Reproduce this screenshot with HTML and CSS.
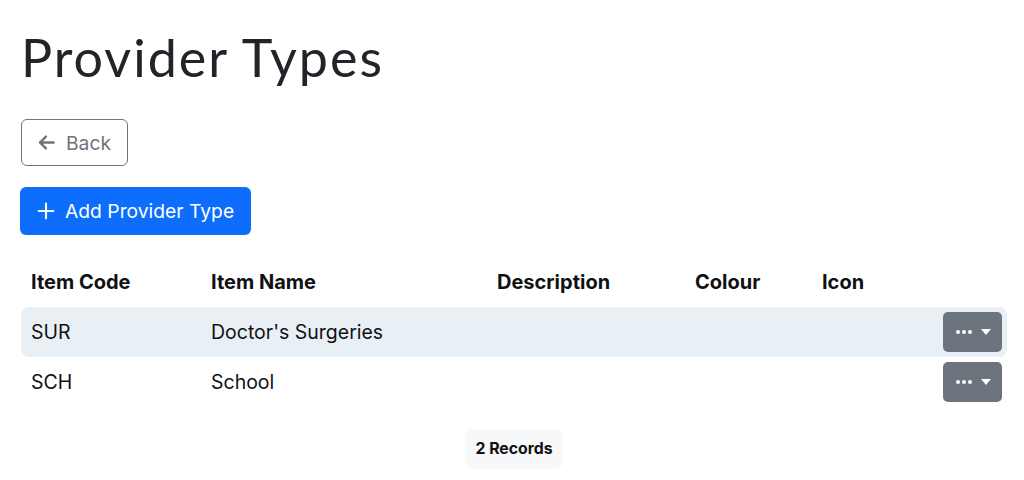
FILE: index.html
```html
<!DOCTYPE html>
<html lang="en">
<head>
<meta charset="utf-8">
<title>Provider Types</title>
<link rel="stylesheet" href="styles.css">
</head>
<body>
<main class="page">
  <h1 class="title">Provider Types</h1>
  <div class="actions">
    <a class="btn btn-outline" href="#">
      <svg class="ico" viewBox="0 0 16 16" width="19" height="19"><path d="M14 8H2.5M7.5 3 2.5 8l5 5" fill="none" stroke="currentColor" stroke-width="2" stroke-linecap="round" stroke-linejoin="round"/></svg>
      <span>Back</span>
    </a>
    <a class="btn btn-primary" href="#">
      <svg class="ico" viewBox="0 0 16 16" width="18" height="18"><path d="M8 1.5v13M1.5 8h13" fill="none" stroke="currentColor" stroke-width="1.9" stroke-linecap="round"/></svg>
      <span>Add Provider Type</span>
    </a>
  </div>
  <table class="grid">
    <thead>
      <tr>
        <th class="c-code">Item Code</th>
        <th class="c-name">Item Name</th>
        <th class="c-desc">Description</th>
        <th class="c-col">Colour</th>
        <th class="c-icon">Icon</th>
        <th class="c-act"></th>
      </tr>
    </thead>
    <tbody>
      <tr class="hl">
        <td>SUR</td>
        <td>Doctor's Surgeries</td>
        <td></td>
        <td></td>
        <td></td>
        <td class="c-act"><button class="dd" type="button"><span class="dots"><i></i><i></i><i></i></span><span class="caret"></span></button></td>
      </tr>
      <tr>
        <td>SCH</td>
        <td>School</td>
        <td></td>
        <td></td>
        <td></td>
        <td class="c-act"><button class="dd" type="button"><span class="dots"><i></i><i></i><i></i></span><span class="caret"></span></button></td>
      </tr>
    </tbody>
  </table>
  <div class="footer">
    <span class="badge">2 Records</span>
  </div>
</main>
</body>
</html>
```
FILE: styles.css
```css
* { box-sizing: border-box; }
html, body { margin: 0; padding: 0; background: #fff; }
body {
  font-family: Inter, "Liberation Sans", Arial, sans-serif;
  font-size: 19.5px;
  color: #111;
}
.page {
  padding: 26px 17px 0 21px;
}
.title {
  font-family: Lato, "Open Sans", sans-serif;
  font-weight: 400;
  font-size: 52px;
  line-height: 62px;
  margin: 0 0 31px 0;
  color: #212529;
  letter-spacing: 2px;
}
.actions {
  display: flex;
  flex-direction: column;
  align-items: flex-start;
  gap: 21px;
}
.btn {
  display: inline-flex;
  align-items: center;
  gap: 10px;
  height: 48px;
  padding: 0 16px;
  border-radius: 6px;
  font-size: 19.3px;
  text-decoration: none;
  border: 1px solid transparent;
}
.btn-outline {
  height: 47px;
  color: #6c757d;
  border-color: #6c757d;
  padding: 0 16px 0 15px;
}
.btn-primary {
  background: #0d6efd;
  color: #fff;
  margin-left: -1px;
}
.ico { display: block; }
.grid {
  margin-top: 26px;
  width: 100%;
  border-collapse: separate;
  border-spacing: 0;
}
.grid th, .grid td {
  text-align: left;
  padding: 0 10px;
  height: 50px;
  vertical-align: middle;
}
.grid th {
  font-weight: 700;
  font-size: 20px;
  height: 46px;
  padding-bottom: 4px;
}
.c-code { width: 180px; }
.c-name { width: 286px; }
.c-desc { width: 198px; }
.c-col { width: 127px; }
.c-icon { width: auto; }
.grid .c-act { text-align: right; width: 80px; padding-right: 5px; }
.hl td { background: #e8f0f6; }
.hl td:first-child { border-radius: 8px 0 0 8px; }
.hl td:last-child { border-radius: 0 8px 8px 0; }
.dd {
  display: inline-flex;
  align-items: center;
  justify-content: center;
  gap: 9px;
  width: 59px;
  height: 40px;
  background: #6c757d;
  border: 0;
  border-radius: 5px;
  vertical-align: middle;
  padding: 0 0 0 2px;
}
.dots { display: inline-flex; gap: 2px; }
.dots i { width: 4px; height: 4px; border-radius: 50%; background: #fff; display: block; }
.caret {
  width: 0; height: 0;
  border-left: 5px solid transparent;
  border-right: 5px solid transparent;
  border-top: 6px solid #fff;
}
.footer {
  display: flex;
  justify-content: center;
  margin-top: 22px;
}
.badge {
  display: inline-block;
  background: #f7f8fa;
  border-radius: 8px;
  padding: 0 10px;
  height: 40px;
  line-height: 40px;
  font-size: 15.8px;
  font-weight: 700;
  color: #111;
}
```
